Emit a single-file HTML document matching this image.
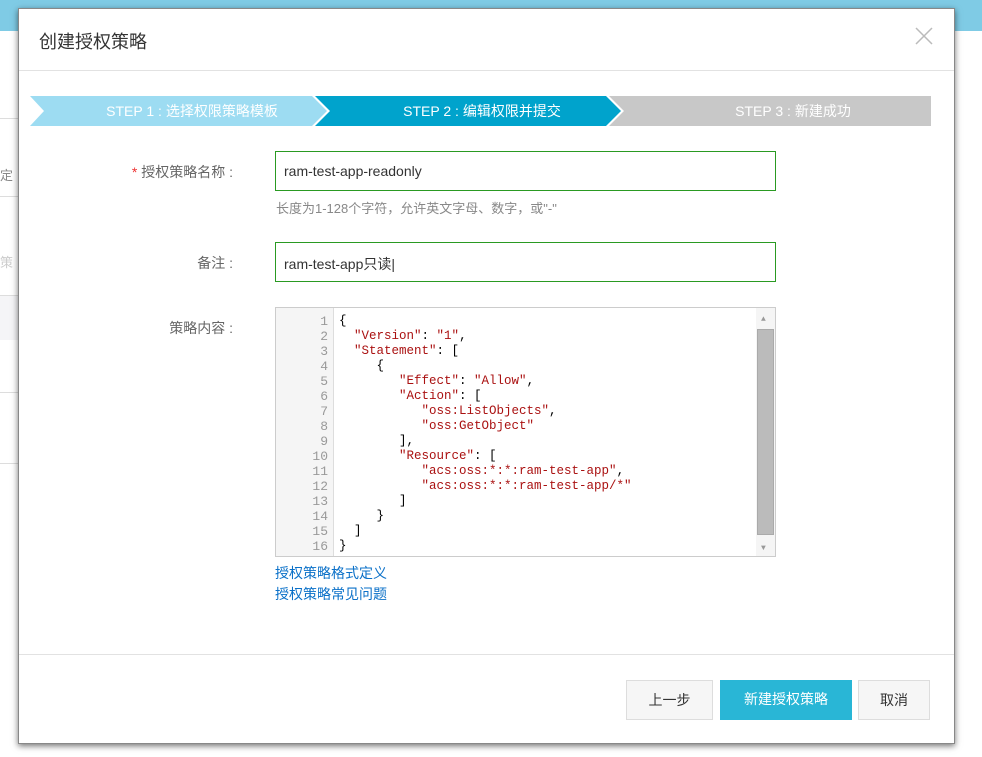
<!DOCTYPE html>
<html><head><meta charset="utf-8"><style>
*{box-sizing:border-box;margin:0;padding:0}
body{width:982px;height:757px;position:relative;overflow:hidden;background:#fff;font-family:"Liberation Sans","Noto Sans CJK SC",sans-serif;}
.top{position:absolute;left:0;top:0;width:982px;height:31px;background:#7fcbe5;color:#fff;font-size:15px}
.abs{position:absolute}
.dlg{position:absolute;left:18px;top:8px;width:937px;height:736px;background:#fff;box-shadow:0 2px 6px rgba(0,0,0,.55);border:1px solid #888}
.lbl{position:absolute;font-size:14px;color:#666;text-align:right;width:200px}
.inp{position:absolute;left:256px;width:501px;height:40px;border:1px solid #2a9a22;font-size:14px;color:#333;padding:11px 8px}
.code{position:absolute;left:256px;top:298px;width:501px;height:250px;border:1px solid #ccc;background:#fff;font-family:"Liberation Mono",monospace;font-size:12.5px;line-height:15px}
.gut{position:absolute;left:0;top:0;width:58px;height:248px;background:#f5f5f5;border-right:1px solid #ddd;color:#999;text-align:right;padding:6px 5px 0 0;font-size:13px}
.src{position:absolute;left:63px;top:6px;white-space:pre;color:#000}
.s{color:#a11}
.btn{position:absolute;top:671px;height:40px;font-size:14px;text-align:center;line-height:38px}
</style></head><body>
<div class="top"></div>
<div class="abs" style="left:0;top:118px;width:18px;height:1px;background:#ddd"></div>
<div class="abs" style="left:0;top:165px;color:#888;font-size:13px">定</div>
<div class="abs" style="left:0;top:196px;width:18px;height:1px;background:#ddd"></div>
<div class="abs" style="left:0;top:252px;color:#ccc;font-size:13px">策</div>
<div class="abs" style="left:0;top:295px;width:18px;height:45px;background:#f5f5f7;border-top:1px solid #ddd"></div>
<div class="abs" style="left:0;top:392px;width:18px;height:1px;background:#ddd"></div>
<div class="abs" style="left:0;top:463px;width:18px;height:1px;background:#ddd"></div>
<div class="dlg">
<div class="abs" style="left:20px;top:19px;font-size:18px;color:#333">创建授权策略</div>
<svg class="abs" style="left:896px;top:18px" width="18" height="18"><path d="M1 1L17 17M17 1L1 17" stroke="#bbb" stroke-width="1.5"/></svg>
<div class="abs" style="left:0;top:61px;width:935px;height:1px;background:#e2e2e2"></div>
<svg class="abs" style="left:11px;top:87px" width="901" height="31">
<polygon points="0,0 282,0 297,15 282,30 0,30 14,15" fill="#9ddcf2"/>
<polygon points="285,0 576,0 591,15 576,30 285,30 300,15" fill="#00a3cc"/>
<polygon points="579,0 901,0 901,30 579,30 594,15" fill="#c8c8c8"/>
<g font-size="14" text-anchor="middle" fill="#fff" font-family="Liberation Sans,Noto Sans CJK SC,sans-serif">
<text x="162" y="20">STEP 1 : 选择权限策略模板</text>
<text x="452" y="20">STEP 2 : 编辑权限并提交</text>
<text x="763" y="20">STEP 3 : 新建成功</text></g>
</svg>
<div class="lbl" style="left:14px;top:153px"><span style="color:#e33">*</span> 授权策略名称 :</div>
<div class="inp" style="top:142px">ram-test-app-readonly</div>
<div class="abs" style="left:257px;top:189px;font-size:13px;color:#888">长度为1-128个字符，允许英文字母、数字，或"-"</div>
<div class="lbl" style="left:14px;top:244px">备注 :</div>
<div class="inp" style="top:233px">ram-test-app只读|</div>
<div class="lbl" style="left:14px;top:309px">策略内容 :</div>
<div class="code"><div class="gut">1<br>2<br>3<br>4<br>5<br>6<br>7<br>8<br>9<br>10<br>11<br>12<br>13<br>14<br>15<br>16</div>
<div class="src">{
  <span class="s">"Version"</span>: <span class="s">"1"</span>,
  <span class="s">"Statement"</span>: [
     {
        <span class="s">"Effect"</span>: <span class="s">"Allow"</span>,
        <span class="s">"Action"</span>: [
           <span class="s">"oss:ListObjects"</span>,
           <span class="s">"oss:GetObject"</span>
        ],
        <span class="s">"Resource"</span>: [
           <span class="s">"acs:oss:*:*:ram-test-app"</span>,
           <span class="s">"acs:oss:*:*:ram-test-app/*"</span>
        ]
     }
  ]
}</div>
<div class="abs" style="left:480px;top:0;width:19px;height:248px;background:#f5f5f5"></div>
<div class="abs" style="left:481px;top:21px;width:17px;height:206px;background:#bbb;border:1px solid #aaa"></div>
<div class="abs" style="left:485px;top:4px;font-size:8px;color:#999">▲</div>
<div class="abs" style="left:485px;top:233px;font-size:8px;color:#999">▼</div>
</div>
<div class="abs" style="left:256px;top:554px;font-size:14px;color:#0a70c8;line-height:21px">授权策略格式定义<br>授权策略常见问题</div>
<div class="abs" style="left:0;top:645px;width:935px;height:1px;background:#e2e2e2"></div>
<div class="btn" style="left:607px;width:87px;background:#f6f6f6;border:1px solid #ddd;color:#333">上一步</div>
<div class="btn" style="left:701px;width:132px;background:#29b6d6;color:#fff">新建授权策略</div>
<div class="btn" style="left:839px;width:72px;background:#f6f6f6;border:1px solid #ddd;color:#333">取消</div>
</div>
</body></html>
